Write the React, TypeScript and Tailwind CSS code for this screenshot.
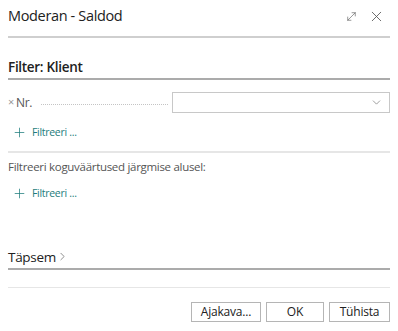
import { X, ChevronDown, ChevronRight, Plus, MoveDiagonal } from "lucide-react"

function AddFilter() {
  return (
    <button className="flex items-center gap-[5px] pl-[4px] text-[10.5px] tracking-[-0.3px] text-[#1d7c7c]">
      <Plus size={15} strokeWidth={1.2} />
      <span>Filtreeri ...</span>
    </button>
  )
}

function App() {
  return (
    <div
      className="w-[398px] h-[331px] bg-white px-2 text-[#212121]"
      style={{ fontFamily: '"Open Sans", "Noto Sans", sans-serif' }}
    >
      <header className="flex h-[38px] items-center justify-between border-b-2 border-[#cfcfcf] pb-1">
        <h1 className="text-[14.5px] tracking-[-0.35px]">Moderan - Saldod</h1>
        <div className="flex items-center gap-[10px] pr-[5px] text-[#555]">
          <MoveDiagonal size={13} strokeWidth={1.1} />
          <X size={17} strokeWidth={1.2} />
        </div>
      </header>

      <section className="mt-[20px]">
        <h2 className="border-b-2 border-[#ababab] pb-[2px] text-[13.5px] font-semibold leading-[18px] tracking-[-0.3px]">
          Filter: Klient
        </h2>

        <div className="mt-[12px] flex items-center">
          <div className="flex w-[160px] items-center text-[12px] tracking-[-0.3px] text-[#555]">
            <span className="text-[11px] text-[#999]">×</span>
            <span className="ml-[2px]">Nr.</span>
            <span className="ml-[9px] mt-[4px] flex-1 border-b border-dotted border-[#c4c4c4]" />
          </div>
          <div className="ml-auto flex h-[21px] w-[218px] items-center justify-end border border-[#c8c8c8] pr-[6px] text-[#777]">
            <ChevronDown size={13} strokeWidth={1.3} />
          </div>
        </div>

        <div className="mt-[12px] pb-[10px] border-b-2 border-[#e6e6e6]">
          <AddFilter />
        </div>

        <p className="mt-[5px] text-[11.5px] text-[#555] tracking-[-0.3px]">
          Filtreeri koguväärtused järgmise alusel:
        </p>

        <div className="mt-[11px]">
          <AddFilter />
        </div>
      </section>

      <section className="mt-[46px]">
        <h2 className="flex items-center border-b-2 border-[#ababab] pb-[2px] text-[13.5px] leading-[18px] tracking-[-0.3px]">
          Täpsem
          <ChevronRight size={13} strokeWidth={1.2} className="text-[#555]" />
        </h2>
      </section>

      <div className="mt-[17px] border-b border-[#e6e6e6]" />

      <footer className="mt-[14px] flex justify-end gap-[5px] text-[12px] tracking-[-0.2px]">
        <button className="h-[20px] w-[70px] border border-[#b5b5b5]">Ajakava...</button>
        <button className="h-[20px] w-[58px] border border-[#b5b5b5]">OK</button>
        <button className="h-[20px] w-[61px] border border-[#b5b5b5]">Tühista</button>
      </footer>
    </div>
  )
}

export default App
